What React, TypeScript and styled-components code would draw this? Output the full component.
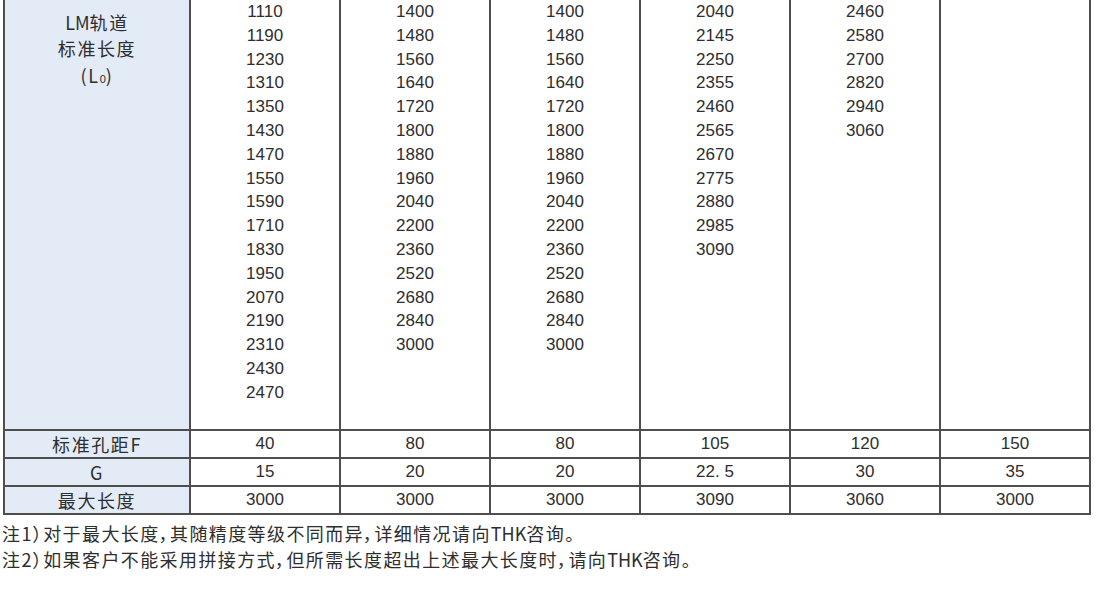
import React from 'react'
import styled, { createGlobalStyle } from 'styled-components'

const GlobalStyle = createGlobalStyle`
  html, body {
    margin: 0;
    padding: 0;
    background: #fff;
  }
  body {
    font-family: "Liberation Sans", "Noto Sans CJK SC", sans-serif;
    color: #2e2e2e;
  }
`

const Page = styled.div`
  width: 1097px;
  height: 600px;
  overflow: hidden;
`

const Table = styled.table`
  margin-left: 3px;
  width: 1088px;
  border-collapse: collapse;
  table-layout: fixed;
`

const HeadCell = styled.th`
  background: #e3ebf7;
  border: 2px solid #4e4e4e;
  border-top: ${p => (p.$first ? 'none' : '2px solid #4e4e4e')};
  font-family: "Noto Sans CJK SC", sans-serif;
  font-weight: 400;
  font-size: 18px;
  letter-spacing: 1.6px;
  color: #2e2e2e;
  text-align: center;
  vertical-align: ${p => (p.$first ? 'top' : 'middle')};
  line-height: ${p => (p.$first ? '26.5px' : '26px')};
  padding: ${p => (p.$first ? '8.5px 0 0' : '0')};
  height: ${p => (p.$first ? '430px' : '28px')};
  box-sizing: border-box;
`

const Cell = styled.td`
  border: 2px solid #4e4e4e;
  border-top: ${p => (p.$first ? 'none' : '2px solid #4e4e4e')};
  font-size: 17px;
  color: #2e2e2e;
  text-align: center;
  vertical-align: ${p => (p.$first ? 'top' : 'middle')};
  line-height: ${p => (p.$first ? '23.8px' : '26px')};
  padding: 0;
`

const Latin = styled.span`
  letter-spacing: 0;
`

const Sub = styled.span`
  font-size: 11px;
  font-family: "Liberation Sans", sans-serif;
  letter-spacing: 0;
`

const Notes = styled.div`
  padding: 5px 0 0 2px;
  font-family: "Noto Sans CJK SC", sans-serif;
  font-size: 18px;
  letter-spacing: 1.4px;
  line-height: 26px;
  color: #2e2e2e;
  font-feature-settings: "palt";
`

const lengths: string[][] = [
  ['1110', '1190', '1230', '1310', '1350', '1430', '1470', '1550', '1590', '1710', '1830', '1950', '2070', '2190', '2310', '2430', '2470'],
  ['1400', '1480', '1560', '1640', '1720', '1800', '1880', '1960', '2040', '2200', '2360', '2520', '2680', '2840', '3000'],
  ['1400', '1480', '1560', '1640', '1720', '1800', '1880', '1960', '2040', '2200', '2360', '2520', '2680', '2840', '3000'],
  ['2040', '2145', '2250', '2355', '2460', '2565', '2670', '2775', '2880', '2985', '3090'],
  ['2460', '2580', '2700', '2820', '2940', '3060'],
  [],
]

const rows = [
  { label: '标准孔距F', values: ['40', '80', '80', '105', '120', '150'] },
  { label: 'G', values: ['15', '20', '20', '22. 5', '30', '35'] },
  { label: '最大长度', values: ['3000', '3000', '3000', '3090', '3060', '3000'] },
]

export default function App() {
  return (
    <Page>
      <GlobalStyle />
      <Table>
        <colgroup>
          <col style={{ width: 186 }} />
          {lengths.map((_, i) => <col key={i} />)}
        </colgroup>
        <tbody>
          <tr>
            <HeadCell $first>
              <Latin>LM</Latin>轨道<br />标准长度<br />(L<Sub>0</Sub>)
            </HeadCell>
            {lengths.map((col, i) => (
              <Cell key={i} $first>
                {col.map((v, j) => <div key={j}>{v}</div>)}
              </Cell>
            ))}
          </tr>
          {rows.map(r => (
            <tr key={r.label}>
              <HeadCell>{r.label}</HeadCell>
              {r.values.map((v, i) => <Cell key={i}>{v}</Cell>)}
            </tr>
          ))}
        </tbody>
      </Table>
      <Notes>
        <div>注1）对于最大长度，其随精度等级不同而异，详细情况请向<Latin>THK</Latin>咨询。</div>
        <div>注2）如果客户不能采用拼接方式，但所需长度超出上述最大长度时，请向<Latin>THK</Latin>咨询。</div>
      </Notes>
    </Page>
  )
}
